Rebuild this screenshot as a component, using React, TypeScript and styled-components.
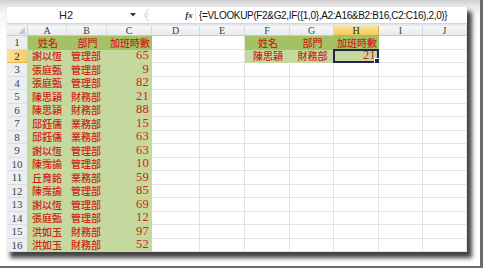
import React from 'react';
import styled, { createGlobalStyle, css } from 'styled-components';

const Global = createGlobalStyle`
  html, body { margin: 0; padding: 0; background: #ffffff; }
  body { width: 484px; height: 270px; overflow: hidden; }
`;

const Frame = styled.div`
  width: 483px;
  height: 268px;
  box-sizing: border-box;
  border-right: 3px solid #6b6b63;
  border-bottom: 2px solid #6b6b63;
  background: linear-gradient(to bottom, #cfcfcf 0px, #e8e8e8 6px, #f7f7f7 14px, #ffffff 40px);
  padding: 7px 0 0 7px;
`;

const Window = styled.div`
  width: 460px;
  height: 245px;
  background: #ffffff;
  border-radius: 3px 3px 0 0;
  box-shadow: 4px 5px 4px 1px rgba(20, 20, 20, 0.8);
  display: flex;
  flex-direction: column;
  overflow: hidden;
`;

const FormulaBar = styled.div`
  height: 16px;
  display: flex;
  align-items: center;
  background: #ffffff;
  border-bottom: 1px solid #d3d7dc;
  flex: none;
`;

const NameBox = styled.div`
  width: 118px;
  text-align: center;
  font: 11px "Liberation Sans", Arial, sans-serif;
  color: #222;
`;

const DropBox = styled.div`
  width: 16px;
  display: flex;
  justify-content: center;
  align-items: center;
`;

const Splitter = styled.div`
  width: 10px;
  height: 14px;
  display: flex;
  align-items: center;
`;

const Spacer = styled.div`
  flex: none;
  width: 32px;
`;

const Fx = styled.div`
  width: 12px;
  text-align: center;
  font: italic bold 9px "Liberation Serif", serif;
  color: #333;
`;

const Sep = styled.div`
  width: 1px;
  height: 14px;
  background: #e2e5e9;
`;

const FormulaText = styled.div`
  flex: 1;
  padding-left: 3px;
  font: 10px "Liberation Sans", Arial, sans-serif;
  letter-spacing: -0.35px;
  color: #111;
  white-space: nowrap;
`;

const Gap = styled.div`
  height: 2px;
  background: #e4e7eb;
  flex: none;
`;

const Sheet = styled.div`
  display: grid;
  grid-template-columns: 21px 39px 40px 45px 48px 45px 45px 44px 45px 44px 44px;
  grid-template-rows: 10px repeat(16, 13.5px);
  flex: none;
`;

const Corner = styled.div`
  position: relative;
  background: linear-gradient(#f6f7f8, #e9ebee);
  border-right: 1px solid #c9ced4;
  border-bottom: 1px solid #c9ced4;
  box-sizing: border-box;
`;

const CornerTri = styled.div`
  position: absolute;
  right: 2px;
  bottom: 1px;
  width: 0;
  height: 0;
  border-left: 7px solid transparent;
  border-bottom: 7px solid #c8c8c8;
`;

const ColHead = styled.div<{ $active?: boolean }>`
  box-sizing: border-box;
  display: flex;
  align-items: center;
  justify-content: center;
  font: 10px "Liberation Serif", serif;
  color: #3d3d3d;
  background: linear-gradient(#f7f8f9, #e8eaed);
  border-right: 1px solid #d6dade;
  border-bottom: 1px solid #c5cad0;
  ${(p) =>
    p.$active &&
    css`
      background: linear-gradient(#fbe39a, #f5c85c);
      border-right-color: #e0b24a;
      border-bottom-color: #d9a23a;
      color: #2a2a2a;
    `}
`;

const RowHead = styled.div<{ $active?: boolean }>`
  box-sizing: border-box;
  display: flex;
  align-items: center;
  justify-content: center;
  font: 11px "Liberation Serif", serif;
  color: #3f3f3f;
  background: #eceff2;
  border-right: 1px solid #c5cad0;
  border-bottom: 1px solid #dadde1;
  ${(p) =>
    p.$active &&
    css`
      background: linear-gradient(90deg, #fbe196, #f6cd66);
      border-bottom-color: #e4b650;
      color: #2a2a2a;
    `}
`;

type Fill = 'head' | 'body' | undefined;
type Align = 'left' | 'center' | 'right';

const fillColor = (f: Fill) => (f === 'head' ? '#a3c263' : f === 'body' ? '#c5d99e' : '#ffffff');

const Cell = styled.div<{ $fill?: Fill; $align?: Align }>`
  position: relative;
  box-sizing: border-box;
  display: flex;
  align-items: center;
  justify-content: ${(p) =>
    p.$align === 'center' ? 'center' : p.$align === 'right' ? 'flex-end' : 'flex-start'};
  padding: 0 2px 0 4px;
  font: 500 10px "Liberation Serif", "Noto Sans CJK TC", serif;
  color: #cc2617;
  white-space: nowrap;
  background: ${(p) => fillColor(p.$fill)};
  border-right: 1px solid ${(p) => (p.$fill ? fillColor(p.$fill) : '#e3e3e3')};
  border-bottom: 1px solid ${(p) => (p.$fill ? fillColor(p.$fill) : '#e3e3e3')};
`;

const Num = styled.span`
  font-size: 12.5px;
  font-weight: 400;
  letter-spacing: 0.2px;
`;

const Selection = styled.div`
  position: absolute;
  left: -1px;
  top: -1px;
  right: -1px;
  bottom: -1px;
  border: 2px solid #262352;
  pointer-events: none;
`;

const FillHandle = styled.div`
  position: absolute;
  right: -4px;
  bottom: -4px;
  width: 5px;
  height: 5px;
  background: #262352;
  border: 1px solid #ffffff;
`;

const cols = ['A', 'B', 'C', 'D', 'E', 'F', 'G', 'H', 'I', 'J'];

const data: [string, string, number][] = [
  ['謝以恆', '管理部', 65],
  ['張庭甄', '管理部', 9],
  ['張庭甄', '管理部', 82],
  ['陳思穎', '財務部', 21],
  ['陳思穎', '財務部', 88],
  ['邱鈺儒', '業務部', 15],
  ['邱鈺儒', '業務部', 63],
  ['謝以恆', '管理部', 63],
  ['陳霈諭', '管理部', 10],
  ['丘育銘', '業務部', 59],
  ['陳霈諭', '管理部', 85],
  ['謝以恆', '管理部', 69],
  ['張庭甄', '管理部', 12],
  ['洪如玉', '財務部', 97],
  ['洪如玉', '財務部', 52],
];

type CellDef = { text?: React.ReactNode; fill?: Fill; align?: Align; selected?: boolean };

function buildRow(r: number): CellDef[] {
  const row: CellDef[] = cols.map(() => ({}));
  if (r === 1) {
    row[0] = { text: '姓名', fill: 'head', align: 'center' };
    row[1] = { text: '部門', fill: 'head', align: 'center' };
    row[2] = { text: '加班時數', fill: 'head', align: 'center' };
    row[5] = { text: '姓名', fill: 'head', align: 'center' };
    row[6] = { text: '部門', fill: 'head', align: 'center' };
    row[7] = { text: '加班時數', fill: 'head', align: 'center' };
  } else {
    const d = data[r - 2];
    row[0] = { text: d[0], fill: 'body', align: 'left' };
    row[1] = { text: d[1], fill: 'body', align: 'left' };
    row[2] = { text: <Num>{d[2]}</Num>, fill: 'body', align: 'right' };
    if (r === 2) {
      row[5] = { text: '陳思穎', fill: 'body', align: 'center' };
      row[6] = { text: '財務部', fill: 'body', align: 'center' };
      row[7] = { text: <Num>21</Num>, fill: 'body', align: 'right', selected: true };
    }
  }
  return row;
}

export default function App() {
  const rows = Array.from({ length: 16 }, (_, i) => i + 1);
  return (
    <>
      <Global />
      <Frame>
        <Window>
          <FormulaBar>
            <NameBox>H2</NameBox>
            <DropBox>
              <svg width="6" height="4" viewBox="0 0 6 4">
                <path d="M0 0 H6 L3 3.5 Z" fill="#333" />
              </svg>
            </DropBox>
            <Splitter>
              <svg width="10" height="14" viewBox="0 0 10 14">
                <path d="M8 1 A6.5 6.5 0 0 0 8 13" fill="none" stroke="#c9ced4" strokeWidth="1" />
                <path d="M5 6 H8 M5 8 H8" stroke="#d3d6da" strokeWidth="0.8" />
              </svg>
            </Splitter>
            <Spacer />
            <Fx>fx</Fx>
            <Sep />
            <FormulaText>{'{=VLOOKUP(F2&G2,IF({1,0},A2:A16&B2:B16,C2:C16),2,0)}'}</FormulaText>
          </FormulaBar>
          <Gap />
          <Sheet>
            <Corner>
              <CornerTri />
            </Corner>
            {cols.map((c) => (
              <ColHead key={c} $active={c === 'H'}>
                {c}
              </ColHead>
            ))}
            {rows.map((r) => (
              <React.Fragment key={r}>
                <RowHead $active={r === 2}>{r}</RowHead>
                {buildRow(r).map((cell, ci) => (
                  <Cell key={ci} $fill={cell.fill} $align={cell.align}>
                    {cell.text}
                    {cell.selected && (
                      <Selection>
                        <FillHandle />
                      </Selection>
                    )}
                  </Cell>
                ))}
              </React.Fragment>
            ))}
          </Sheet>
        </Window>
      </Frame>
    </>
  );
}
